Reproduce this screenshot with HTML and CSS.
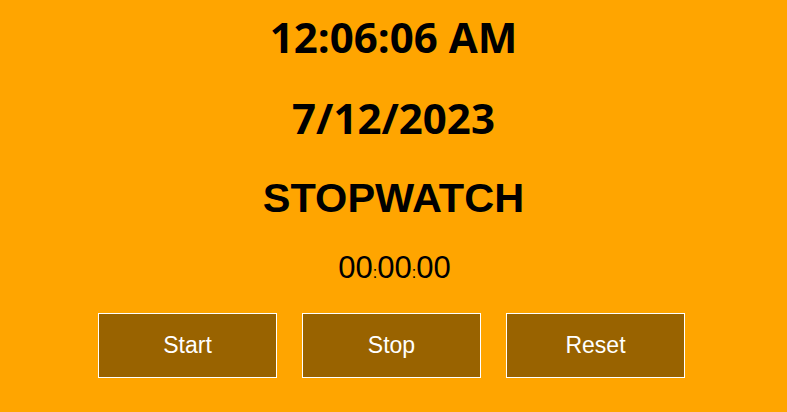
FILE: index.html
```html
<!DOCTYPE html>
<html>
<head>
<meta charset="utf-8">
<link rel="stylesheet" href="styles.css">
</head>
<body>
<main class="app">
  <div class="clock">12:06:06 AM</div>
  <div class="date">7/12/2023</div>
  <h1 class="title">STOPWATCH</h1>
  <div class="watch">00<span class="sep">:</span>00<span class="sep">:</span>00</div>
  <div class="controls">
    <button class="btn">Start</button>
    <button class="btn">Stop</button>
    <button class="btn">Reset</button>
  </div>
</main>
</body>
</html>
```

FILE: styles.css
```css
html, body {
  margin: 0;
  padding: 0;
  background: #ffa500;
}
.app {
  display: flex;
  flex-direction: column;
  align-items: center;
  height: 412px;
  color: #000;
}
.clock, .date {
  font-family: "Open Sans", "Noto Sans", sans-serif;
  font-weight: 700;
  font-size: 42px;
  line-height: 48px;
}
.clock { margin-top: 13px; }
.date { margin-top: 33px; }
.title {
  margin: 32px 0 0;
  font-family: "Liberation Sans", Arial, sans-serif;
  font-weight: 700;
  font-size: 41.5px;
  line-height: 48px;
}
.watch {
  margin-top: 28px;
  font-family: "Liberation Sans", Arial, sans-serif;
  font-size: 31px;
  line-height: 36px;
  padding-left: 2px;
}
.sep {
  font-size: 16px;
}
.controls {
  margin-top: 22px;
  display: flex;
  gap: 25px;
  padding-right: 4px;
}
.btn {
  box-sizing: border-box;
  width: 179px;
  height: 65px;
  background: #996300;
  border: 1px solid #fff;
  color: #fff;
  font-family: "Liberation Sans", Arial, sans-serif;
  font-size: 23px;
  padding: 0;
  margin: 0;
}
```
